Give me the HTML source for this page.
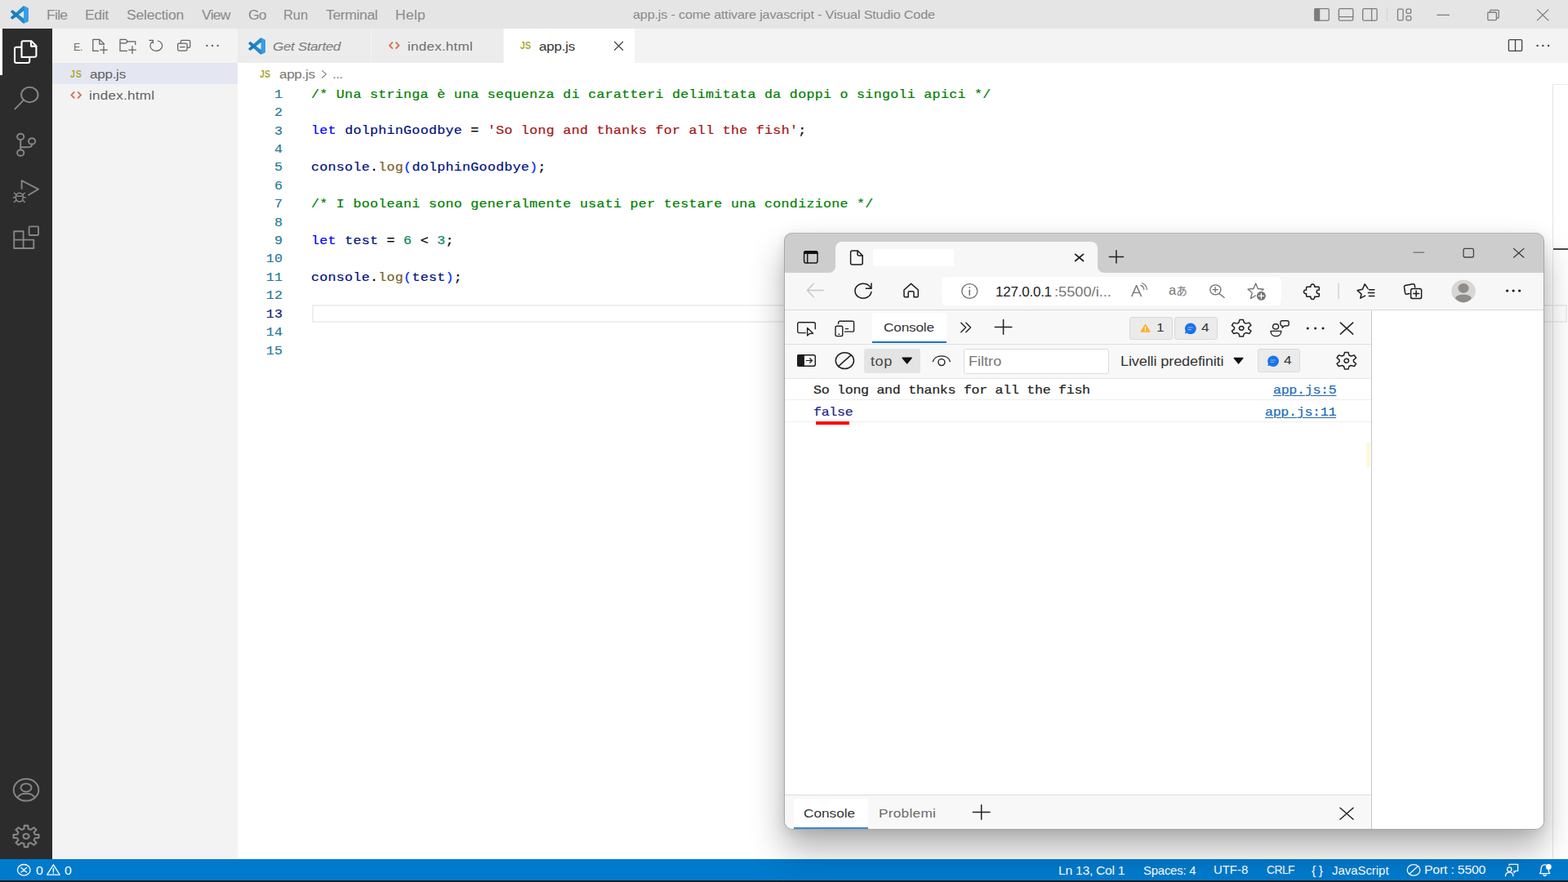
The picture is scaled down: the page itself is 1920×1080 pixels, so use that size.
<!DOCTYPE html>
<html lang="it">
<head>
<meta charset="utf-8">
<title>app.js - come attivare javascript - Visual Studio Code</title>
<style>
*{box-sizing:border-box}
html,body{margin:0;padding:0;width:1920px;height:1080px;overflow:hidden;background:#fff}
body{position:relative;font-family:"Liberation Sans","Noto Sans CJK JP",sans-serif;color:#333;-webkit-font-smoothing:antialiased}
.a{position:absolute}
.t{position:absolute;white-space:nowrap;line-height:1;margin:0;padding:0;transform:scaleX(1.111);transform-origin:0 0}
svg{position:absolute;overflow:visible}
.mono{font-family:"Liberation Mono","DejaVu Sans Mono",monospace}

/* ---------- VS Code chrome ---------- */
#titlebar{left:0;top:0;width:1920px;height:35px;background:#e5e5e5}
#titlebar .t{font-size:16px;color:#8a8a8a;top:10px}
#actbar{left:0;top:35px;width:64px;height:1017px;background:#2c2c2c}
#actind{left:0;top:35px;width:3px;height:57px;background:#fff}
#sidebar{left:64px;top:35px;width:227px;height:1017px;background:#f3f3f3}
#siderow{left:64px;top:77px;width:227px;height:26px;background:#e4e6f1}
#tabs{left:291px;top:35px;width:1629px;height:42px;background:#f3f3f3}
.tab{position:absolute;top:35px;height:42px;background:#ececec;border-right:1px solid #f3f3f3}
#tab3{background:#fff;border-right:0}
#editor{left:291px;top:77px;width:1629px;height:975px;background:#fff}
#status{left:0;top:1052px;width:1920px;height:26px;background:#007acc}
#status .t{color:#fff;font-size:15.5px;top:1058px}
#bottomline{left:0;top:1078px;width:1920px;height:2px;background:#1d1d1d}

/* ---------- editor ---------- */
.ln{position:absolute;left:300px;width:46.3px;text-align:right;font-size:15px;letter-spacing:.234px;margin-top:2.7px;-webkit-text-stroke:.15px currentColor;line-height:22.5px;height:22.5px;color:#237893;white-space:nowrap;transform:scaleX(1.111);transform-origin:100% 0}
.cl{position:absolute;left:381.3px;font-size:15px;letter-spacing:.25px;margin-top:2.6px;-webkit-text-stroke:.2px currentColor;line-height:22.5px;height:22.5px;color:#000;white-space:pre;transform:scaleX(1.111);transform-origin:0 0}
.c-com{color:#008000}.c-kw{color:#0000ff}.c-var{color:#001080}.c-str{color:#a31515}.c-fn{color:#795e26}.c-num{color:#098658}.c-par{color:#0431fa}
#curline{left:381.5px;top:373.2px;width:1537px;height:22px;border:2px solid #efefef}
#ruler{left:1901px;top:103px;width:19px;height:949px;border-left:1px solid #e4e4e4;border-top:1px solid #ececec}
#rulermark{left:1902px;top:304px;width:18px;height:2px;background:#4a4a4a}

/* ---------- browser window ---------- */
#bshadow{left:959.5px;top:285px;width:931px;height:730.5px;border-radius:10px;box-shadow:0 24px 42px rgba(0,0,0,.30),0 3px 14px rgba(0,0,0,.09)}
#bwin{left:959.6px;top:285px;width:930.8px;height:730.4px;border-radius:10px;background:linear-gradient(#cdcdcd 0,#cdcdcd 48.5px,#f7f7f7 48.5px,#f7f7f7 94.5px,#fff 94.5px,#fff 100%);overflow:hidden}
#bborder{left:959.5px;top:285px;width:931px;height:730.5px;border-radius:10px;border:1px solid #a6a6a6;border-top-color:#b8b8b8}
#bwin .a,#bwin .t,#bwin svg{position:absolute}
#btitle{left:0;top:0;width:930px;height:48.5px;background:#cdcdcd}
#btab{left:63.5px;top:11px;width:320.5px;height:38px;background:#f7f7f7;border-radius:8px 8px 0 0}
#btabl{left:55.5px;top:40.5px;width:8px;height:8px;background:radial-gradient(circle at 0 0,rgba(247,247,247,0) 7.5px,#f7f7f7 8.5px)}
#btabr{left:384px;top:40.5px;width:8px;height:8px;background:radial-gradient(circle at 100% 0,rgba(247,247,247,0) 7.5px,#f7f7f7 8.5px)}
#bredact{left:109px;top:20px;width:99px;height:21px;background:#fff}
#btool{left:0;top:48.5px;width:930px;height:46px;background:#f7f7f7;border-bottom:1px solid #d9d9d9}
#burl{left:193px;top:53.8px;width:416px;height:35.2px;background:#fff;border-radius:6px}
#dt{left:0;top:94.5px;width:720px;height:636px;background:#fff;border-right:1px solid #c6c6c6}
#dttabs{left:0;top:94.5px;width:719px;height:42.5px;background:#f8f8f8;border-bottom:1px solid #dedede}
#dtconsoletab{left:107.6px;top:97.7px;width:91px;height:37.5px;background:#fff;border-bottom:2.5px solid #1a73c7;border-radius:3px 3px 0 0}
#dttool{left:0;top:137px;width:719px;height:41.7px;background:#f8f8f8;border-bottom:1px solid #e6e6e6}
.badge{position:absolute;background:#ebebeb;border:1px solid #dadada;border-radius:3px}
.crow{position:absolute;left:0;width:719px;border-bottom:1px solid #efefef}
#drawer{left:0;top:688px;width:719px;height:42px;background:#f8f8f8;border-top:1px solid #dcdcdc}
#drawertab{left:11.7px;top:692.5px;width:91px;height:37.4px;background:#fff;border-bottom:2.7px solid #3b8bd0;border-radius:3px 3px 0 0}
#topsel{left:98px;top:141.5px;width:69px;height:30px;background:#e4e4e4;border-radius:3px}
#filter{left:220.5px;top:141.5px;width:177.5px;height:31px;background:#fff;border:1px solid #dcdcdc;border-radius:3px}
#ymark{left:713px;top:257px;width:5.5px;height:30px;background:#fdf8dc}
</style>
</head>
<body>

<!-- VS Code blocks -->
<div class="a" id="titlebar"></div>
<div class="a" id="actbar"></div>
<div class="a" id="actind"></div>
<div class="a" id="sidebar"></div>
<div class="a" id="siderow"></div>
<div class="a" id="tabs"></div>
<div class="tab" id="tab1" style="left:291px;width:164px"></div>
<div class="tab" id="tab2" style="left:455px;width:162px"></div>
<div class="tab" id="tab3" style="left:617px;width:160px"></div>
<div class="a" id="editor"></div>
<div class="a" id="curline"></div>
<div class="a" id="ruler"></div>
<div class="a" id="rulermark"></div>
<div class="a" id="status"></div>
<div class="a" id="bottomline"></div>

<!-- title bar text -->
<span class="t" id="m-file" style="left:57.0px;top:10.5px;letter-spacing:-0.66px;font-size:15.8px;color:#8a8a8a">File</span>
<span class="t" id="m-edit" style="left:104.0px;top:10.5px;letter-spacing:-0.33px;font-size:15.8px;color:#8a8a8a">Edit</span>
<span class="t" id="m-sel" style="left:155.0px;top:10.5px;letter-spacing:-0.22px;font-size:15.8px;color:#8a8a8a">Selection</span>
<span class="t" id="m-view" style="left:246.7px;top:10.5px;letter-spacing:-0.66px;font-size:15.8px;color:#8a8a8a">View</span>
<span class="t" id="m-go" style="left:304.0px;top:10.8px;letter-spacing:-0.90px;font-size:15.8px;color:#8a8a8a">Go</span>
<span class="t" id="m-run" style="left:347.0px;top:10.8px;letter-spacing:0.00px;font-size:15.8px;color:#8a8a8a;transform:scaleX(1.04)">Run</span>
<span class="t" id="m-term" style="left:399.0px;top:10.5px;letter-spacing:-0.34px;font-size:15.8px;color:#8a8a8a">Terminal</span>
<span class="t" id="m-help" style="left:484.0px;top:10.5px;letter-spacing:0.23px;font-size:15.8px;color:#8a8a8a">Help</span>
<span class="t" id="m-title" style="left:775.0px;top:11.2px;letter-spacing:-0.17px;font-size:14.6px;color:#8a8a8a">app.js - come attivare javascript - Visual Studio Code</span>
<!--TITLEBAR-->
<!--VSICONS-START-->
<svg id="vsicons" width="1920" height="1080" viewBox="0 0 1920 1080" style="left:0;top:0" fill="none" stroke-linecap="round" stroke-linejoin="round">
<g transform="translate(13.2,7.2) scale(0.215)"><path fill="#2489ca" d="M96.46 10.8L75.86.88a6.23 6.23 0 0 0-7.1 1.21L29.35 38.04 12.19 25.01a4.16 4.16 0 0 0-5.32.24L1.36 30.26a4.17 4.17 0 0 0 0 6.17L16.25 50 1.36 63.58a4.17 4.17 0 0 0 0 6.17l5.5 5.01a4.16 4.16 0 0 0 5.32.24l17.17-13.03 39.41 35.95a6.22 6.22 0 0 0 7.1 1.21l20.6-9.91A6.25 6.25 0 0 0 100 83.58V16.41a6.25 6.25 0 0 0-3.54-5.61zM75.01 72.7L45.11 50l29.9-22.7z"/><path fill="#1070b3" d="M29.35 38.04 12.19 25.01a4.16 4.16 0 0 0-5.32.24L1.36 30.26a4.17 4.17 0 0 0 0 6.17L16.25 50 1.36 63.58a4.17 4.17 0 0 0 0 6.17l5.5 5.01a4.16 4.16 0 0 0 5.32.24l17.17-13.03L45.11 50z" opacity=".55"/><path fill="#3c9fe8" d="M75.86.88 96.46 10.8A6.25 6.25 0 0 1 100 16.41v67.17a6.25 6.25 0 0 1-3.54 5.63l-20.6 9.91a6.2 6.2 0 0 1-.85.33V.55c.29.09.57.2.85.33z" opacity=".9"/></g>
<g transform="translate(304.4,46.2) scale(0.205)"><path fill="#2489ca" d="M96.46 10.8L75.86.88a6.23 6.23 0 0 0-7.1 1.21L29.35 38.04 12.19 25.01a4.16 4.16 0 0 0-5.32.24L1.36 30.26a4.17 4.17 0 0 0 0 6.17L16.25 50 1.36 63.58a4.17 4.17 0 0 0 0 6.17l5.5 5.01a4.16 4.16 0 0 0 5.32.24l17.17-13.03 39.41 35.95a6.22 6.22 0 0 0 7.1 1.21l20.6-9.91A6.25 6.25 0 0 0 100 83.58V16.41a6.25 6.25 0 0 0-3.54-5.61zM75.01 72.7L45.11 50l29.9-22.7z"/><path fill="#1070b3" d="M29.35 38.04 12.19 25.01a4.16 4.16 0 0 0-5.32.24L1.36 30.26a4.17 4.17 0 0 0 0 6.17L16.25 50 1.36 63.58a4.17 4.17 0 0 0 0 6.17l5.5 5.01a4.16 4.16 0 0 0 5.32.24l17.17-13.03L45.11 50z" opacity=".55"/><path fill="#3c9fe8" d="M75.86.88 96.46 10.8A6.25 6.25 0 0 1 100 16.41v67.17a6.25 6.25 0 0 1-3.54 5.63l-20.6 9.91a6.2 6.2 0 0 1-.85.33V.55c.29.09.57.2.85.33z" opacity=".9"/></g>
<g stroke="#7c7c7c" stroke-width="1.3">
<rect x="1609.9" y="10.7" width="17.4" height="14.4" rx="1.6"/><path d="M1610,11 h5.6 v14 h-5.6z" fill="#7c7c7c"/>
<rect x="1639.4" y="10.7" width="17.4" height="14.4" rx="1.6"/><path d="M1639.6,20.6 h17"/>
<rect x="1668.7" y="10.7" width="17.4" height="14.4" rx="1.6"/><path d="M1679.6,11 v14"/>
<rect x="1711.5" y="11.2" width="6.6" height="13.6" rx="1.4"/><rect x="1722" y="11.2" width="5.7" height="5.2" rx="1.4"/><rect x="1722" y="19.6" width="5.7" height="5.2" rx="1.4"/>
<path d="M1760,18.4 h14.4"/>
<rect x="1821.8" y="15" width="10.6" height="9.6" rx="1"/><path d="M1824.6,14.8 v-1.4 a1,1 0 0 1 1,-1 h8.6 a1,1 0 0 1 1,1 v7.6 a1,1 0 0 1 -1,1 h-1.6"/>
<path d="M1882.4,11.9 l13.4,13 M1895.8,11.9 l-13.4,13"/>
</g>
<path d="M1698.4,9 v17.6" stroke="#d2d2d2" stroke-width="1"/>
<g stroke="#ffffff" stroke-width="2.1">
<path d="M26.5,70 V52.2 a2,2 0 0 1 2,-2 H38.4 L44.4,56.2 V67.8 a2,2 0 0 1 -2,2 Z"/><path d="M38,50.6 V56.6 H44"/>
<path d="M26,57.8 H20 a2,2 0 0 0 -2,2 V75 a2,2 0 0 0 2,2 H34.2 a2,2 0 0 0 2,-2 V70.4"/>
</g>
<g stroke="#858585" stroke-width="2">
<ellipse cx="36.3" cy="116" rx="10.2" ry="9.2"/><path d="M28.9,122.6 L18.4,133.4"/>
<ellipse cx="25.2" cy="167.4" rx="4.1" ry="3.65"/><ellipse cx="39.1" cy="172.9" rx="4.1" ry="3.65"/><ellipse cx="25.2" cy="187.2" rx="4.1" ry="3.65"/>
<path d="M25.2,171.2 V183.4"/><path d="M39.1,176.7 C39.1,180.6 36,180.3 25.4,180.3"/>
<path d="M26.6,231 V221.2 L47,231.6 L35,238.8" stroke-width="1.9"/>
<g stroke-width="1.5"><ellipse cx="23.8" cy="241.6" rx="4.6" ry="5.4"/><path d="M19.4,240.2 h8.8 M19.2,241.8 h-2.8 M28.4,241.8 h2.8 M19.8,238.4 l-2.4,-2.2 M27.8,238.4 l2.4,-2.2 M19.8,245.2 l-2.4,2.2 M27.8,245.2 l2.4,2.2"/></g>
<g stroke-width="1.9"><path d="M17.2,283.3 H28.6 V293.6 H41.3 V304 H17.2 Z M17.2,293.6 H28.6 V304"/><rect x="35.6" y="277.4" width="11.4" height="10.6" rx="1"/></g>
<ellipse cx="32" cy="967.2" rx="15.3" ry="13.4"/><ellipse cx="32" cy="964.4" rx="6.5" ry="5"/><path d="M21.6,976.6 C24,970 40,970 42.4,976.6"/>
<g transform="translate(32,1024) scale(1.09,0.92)"><path d="M-2.46,-9.90 L-2.03,-14.26 L2.03,-14.26 L2.46,-9.90 L5.26,-8.74 L8.65,-11.52 L11.52,-8.65 L8.74,-5.26 L9.90,-2.46 L14.26,-2.03 L14.26,2.03 L9.90,2.46 L8.74,5.26 L11.52,8.65 L8.65,11.52 L5.26,8.74 L2.46,9.90 L2.03,14.26 L-2.03,14.26 L-2.46,9.90 L-5.26,8.74 L-8.65,11.52 L-11.52,8.65 L-8.74,5.26 L-9.90,2.46 L-14.26,2.03 L-14.26,-2.03 L-9.90,-2.46 L-8.74,-5.26 L-11.52,-8.65 L-8.65,-11.52 L-5.26,-8.74Z" stroke-width="2.1" vector-effect="non-scaling-stroke"/><circle cx="0" cy="0" r="3.3" stroke-width="2.1" vector-effect="non-scaling-stroke"/></g>
</g>
<g stroke="#616161" stroke-width="1.25">
<path d="M120.4,62.4 H113.8 V48.4 H122 L127.4,53.8 V54.6"/><path d="M121.8,48.6 V54 H127.2"/><path d="M127,56.6 v8.8 M122.6,61 h8.8"/>
<path d="M155.4,62.4 H147 V48.4 H154.2 L156.4,50.8 H165.8 V54.6"/><path d="M147.2,52.8 H154.4 L156.4,50.8"/><path d="M162,56.6 v8.8 M157.6,61 h8.8"/>
<path d="M193.5,50 A7.4,6.3 0 1 1 186.4,51.3"/><path d="M183,49.4 H187.4 V52.8"/>
<rect x="217.7" y="53" width="11.4" height="9" rx="1.4"/><path d="M220.6,57.5 h5.6"/><path d="M221.4,52.6 v-1.8 a1.4,1.4 0 0 1 1.4,-1.4 h8.6 a1.4,1.4 0 0 1 1.4,1.4 v6.2 a1.4,1.4 0 0 1 -1.4,1.4 h-2"/>
</g>
<g fill="#616161"><circle cx="253.4" cy="55.9" r="1.2"/><circle cx="260" cy="55.9" r="1.2"/><circle cx="266.7" cy="55.9" r="1.2"/></g>
<g stroke="#d2704a" stroke-width="1.8" stroke-linecap="butt" stroke-linejoin="miter"><path d="M91.2,112.4 L87.4,116.4 L91.2,120.4 M95.2,112.4 L99,116.4 L95.2,120.4"/>
<path d="M480.8,51.7 L477,55.7 L480.8,59.7 M484.6,51.7 L488.4,55.7 L484.6,59.7"/></g>
<path d="M394.4,86.6 L399.4,90.9 L394.4,95.2" stroke="#7a7a7a" stroke-width="1.2"/>
<path d="M752.6,51.2 l10,10 M762.6,51.2 l-10,10" stroke="#4a4a4a" stroke-width="1.3"/>
<g stroke="#424242" stroke-width="1.3"><rect x="1847.4" y="48.6" width="16.2" height="13.8" rx="1.2"/><path d="M1855.5,48.8 v13.4"/></g>
<g fill="#424242"><circle cx="1882.6" cy="55.9" r="1.2"/><circle cx="1889.3" cy="55.9" r="1.2"/><circle cx="1896.1" cy="55.9" r="1.2"/></g>
<g stroke="#ffffff" stroke-width="1.3">
<ellipse cx="29.25" cy="1065.3" rx="7.8" ry="6.8"/><path d="M25.9,1062.5 l6.7,5.6 M32.6,1062.5 l-6.7,5.6"/>
<path d="M65.4,1058.8 L73.2,1071.2 H57.6 Z"/><path d="M65.4,1063.2 v4" stroke-width="1.5"/><path d="M65.4,1068.9 v.4" stroke-width="1.5"/>
<ellipse cx="1731" cy="1065.4" rx="7.8" ry="6.8"/><path d="M1725.6,1070.2 l10.8,-9.6"/>
<circle cx="1848.2" cy="1064.6" r="2.7"/><path d="M1843.4,1072.6 c0.4,-6 9.2,-6 9.6,0"/><path d="M1848,1059.6 v-1.2 h10.6 v8 h-2.6 l-2,2.2 v-2.2"/>
<path d="M1885.6,1069.6 c1.4,-1.6 1.4,-3 1.4,-5.4 c0,-3.4 1.8,-5.4 4.6,-5.4 c2.8,0 4.6,2 4.6,5.4 c0,2.4 0,3.8 1.4,5.4 Z"/><path d="M1890,1071.2 c0.4,1.4 2.8,1.4 3.2,0"/>
</g>
<circle cx="1896.3" cy="1061.5" r="3.4" fill="#ffffff"/>
</svg>
<!--VSICONS-END-->
<!-- sidebar text -->
<span class="t" id="s-e" style="left:90.0px;top:51.6px;letter-spacing:-0.30px;font-size:12.4px;transform:none;color:#6b6b6b">E.</span>
<span class="t" id="s-js" style="left:86.0px;top:85.1px;letter-spacing:1.00px;font-size:12.3px;transform:scaleX(.86);font-weight:bold;color:#a9a935">JS</span>
<span class="t" id="s-app" style="left:110.0px;top:83.0px;letter-spacing:-0.26px;font-size:15.4px;color:#616161">app.js</span>
<span class="t" id="s-idx" style="left:109.0px;top:108.9px;letter-spacing:0.20px;font-size:15.4px;color:#616161">index.html</span>
<!--SIDEBAR-->
<!-- tabs text -->
<span class="t" id="t-gs" style="left:334.4px;top:49.3px;letter-spacing:-0.37px;font-size:15.4px;font-style:italic;color:#7b7b7b">Get Started</span>
<span class="t" id="t-idx" style="left:498.7px;top:48.7px;letter-spacing:0.18px;font-size:15.4px;color:#6f6f6f">index.html</span>
<span class="t" id="t-js" style="left:636.7px;top:50.0px;letter-spacing:0.20px;font-size:12.3px;transform:scaleX(.86);font-weight:bold;color:#a9a935">JS</span>
<span class="t" id="t-app" style="left:659.6px;top:48.6px;letter-spacing:-0.22px;font-size:15.4px;color:#333">app.js</span>
<span class="t" id="b-js" style="left:318.3px;top:85.1px;letter-spacing:0.20px;font-size:12.3px;transform:scaleX(.86);font-weight:bold;color:#a9a935">JS</span>
<span class="t" id="b-app" style="left:342.0px;top:83.0px;letter-spacing:-0.30px;font-size:15.4px;color:#767676">app.js</span>
<span class="t" id="b-dots" style="left:407.0px;top:83.0px;letter-spacing:-0.55px;font-size:15.4px;color:#767676">...</span>
<!--TABS-->
<!-- editor lines -->
<div class="ln mono" id="ln1" style="top:103.00px;color:#237893">1</div><div class="cl mono" id="cl1" style="top:103.00px"><span class="c-com">/* Una stringa è una sequenza di caratteri delimitata da doppi o singoli apici */</span></div>
<div class="ln mono" id="ln2" style="top:125.42px;color:#237893">2</div>
<div class="ln mono" id="ln3" style="top:147.84px;color:#237893">3</div><div class="cl mono" id="cl3" style="top:147.84px"><span class="c-kw">let</span> <span class="c-var">dolphinGoodbye</span> = <span class="c-str">'So long and thanks for all the fish'</span>;</div>
<div class="ln mono" id="ln4" style="top:170.26px;color:#237893">4</div>
<div class="ln mono" id="ln5" style="top:192.68px;color:#237893">5</div><div class="cl mono" id="cl5" style="top:192.68px"><span class="c-var">console</span>.<span class="c-fn">log</span><span class="c-par">(</span><span class="c-var">dolphinGoodbye</span><span class="c-par">)</span>;</div>
<div class="ln mono" id="ln6" style="top:215.10px;color:#237893">6</div>
<div class="ln mono" id="ln7" style="top:237.52px;color:#237893">7</div><div class="cl mono" id="cl7" style="top:237.52px"><span class="c-com">/* I booleani sono generalmente usati per testare una condizione */</span></div>
<div class="ln mono" id="ln8" style="top:259.94px;color:#237893">8</div>
<div class="ln mono" id="ln9" style="top:282.36px;color:#237893">9</div><div class="cl mono" id="cl9" style="top:282.36px"><span class="c-kw">let</span> <span class="c-var">test</span> = <span class="c-num">6</span> &lt; <span class="c-num">3</span>;</div>
<div class="ln mono" id="ln10" style="top:304.78px;color:#237893">10</div>
<div class="ln mono" id="ln11" style="top:327.20px;color:#237893">11</div><div class="cl mono" id="cl11" style="top:327.20px"><span class="c-var">console</span>.<span class="c-fn">log</span><span class="c-par">(</span><span class="c-var">test</span><span class="c-par">)</span>;</div>
<div class="ln mono" id="ln12" style="top:349.62px;color:#237893">12</div>
<div class="ln mono" id="ln13" style="top:372.04px;color:#0b216f">13</div>
<div class="ln mono" id="ln14" style="top:394.46px;color:#237893">14</div>
<div class="ln mono" id="ln15" style="top:416.88px;color:#237893">15</div>
<!--EDITOR-->
<!-- status bar text -->
<span class="t" id="st-e0" style="left:43.7px;top:1058.5px;letter-spacing:0.00px;font-size:14.2px;color:#fff">0</span>
<span class="t" id="st-w0" style="left:79.0px;top:1058.5px;letter-spacing:0.00px;font-size:14.2px;color:#fff">0</span>
<span class="t" id="st-ln" style="left:1296.2px;top:1059.0px;letter-spacing:-0.28px;font-size:14.2px;color:#fff">Ln 13, Col 1</span>
<span class="t" id="st-sp" style="left:1400.0px;top:1058.8px;letter-spacing:-0.20px;font-size:14.2px;color:#fff;transform:scaleX(1.05)">Spaces: 4</span>
<span class="t" id="st-utf" style="left:1486.0px;top:1058.2px;letter-spacing:0.00px;font-size:14.2px;color:#fff;transform:scaleX(1.05)">UTF-8</span>
<span class="t" id="st-crlf" style="left:1551.2px;top:1058.2px;letter-spacing:-0.60px;font-size:14.2px;color:#fff;transform:scaleX(.98)">CRLF</span>
<span class="t" id="st-br" style="left:1606.4px;top:1058.8px;letter-spacing:-0.45px;font-size:14.2px;color:#fff">{ }</span>
<span class="t" id="st-lang" style="left:1631.0px;top:1058.9px;letter-spacing:0.00px;font-size:14.2px;color:#fff;transform:scaleX(1.05)">JavaScript</span>
<span class="t" id="st-port" style="left:1744.4px;top:1058.2px;letter-spacing:-0.16px;font-size:14.2px;color:#fff">Port : 5500</span>
<!--STATUS-->

<!-- Browser window -->
<div class="a" id="bshadow"></div>
<div class="a" id="bwin">
<div class="a" id="bwin-in" style="left:0.4px;top:0;width:930px;height:730px">
  <div class="a" id="btitle"></div>
  <div class="a" id="btool"></div>
  <div class="a" id="btab"></div>
  <div class="a" id="btabl"></div>
  <div class="a" id="btabr"></div>
  <div class="a" id="bredact"></div>
  <div class="a" id="burl"></div>
  <div class="a" id="dt"></div>
  <div class="a" id="dttabs"></div>
  <div class="a" id="dtconsoletab"></div>
  <div class="badge" style="left:423px;top:102.5px;width:53px;height:28.5px"></div>
  <div class="badge" style="left:478px;top:102.5px;width:53px;height:28.5px"></div>
  <div class="a" id="dttool"></div>
  <div class="a" id="topsel"></div>
  <div class="a" id="filter"></div>
  <div class="badge" style="left:579.7px;top:142.2px;width:52.3px;height:29px"></div>
  <div class="crow" style="top:178.7px;height:26px"></div>
  <div class="crow" style="top:204.7px;height:27px"></div>
  <div class="a" id="ymark"></div>
  <div class="a" id="drawer"></div>
  <div class="a" id="drawertab"></div>
</div>
</div>
<div class="a" id="bborder"></div>
<!--BICONS-START-->
<svg id="bicons" width="1920" height="1080" viewBox="0 0 1920 1080" style="left:0;top:0" fill="none" stroke-linecap="round" stroke-linejoin="round">
<g stroke="#1b1b1b" stroke-width="1.5"><rect x="984.6" y="307.8" width="16.4" height="14.2" rx="2.6"/><path d="M984,310.9 v-1.4 a2.6,2.6 0 0 1 2.6,-2.6 h12.4 a2.6,2.6 0 0 1 2.6,2.6 v1.4 z" fill="#111" stroke="none"/><path d="M988.7,310 v11.8"/></g>
<g stroke="#1b1b1b" stroke-width="1.5"><path d="M1043.6,307 h6.6 l6,6 v9 a2,2 0 0 1 -2,2 h-10.6 a2,2 0 0 1 -2,-2 v-13 a2,2 0 0 1 2,-2 z"/><path d="M1050,307.2 v4.2 a1.6,1.6 0 0 0 1.6,1.6 h4.4"/></g>
<path d="M1316.70,311.30 L1326.50,319.50 M1326.50,311.30 L1316.70,319.50" stroke="#1b1b1b" stroke-width="1.7"/>
<path d="M1358.30,314.40 H1375.50 M1366.90,306.80 V322.00" stroke="#222" stroke-width="1.5"/>
<path d="M1730.8,309.1 h13" stroke="#6f6f6f" stroke-width="1.2"/>
<rect x="1792" y="304.4" width="12.4" height="10.6" rx="2" stroke="#444" stroke-width="1.3"/>
<path d="M1853.50,304.40 L1865.90,315.20 M1865.90,304.40 L1853.50,315.20" stroke="#333" stroke-width="1.2"/>
<path d="M1008.2,355.5 H988.6 M996.2,347.6 L988.4,355.5 L996.2,363.4" stroke="#c6c6c6" stroke-width="1.4"/>
<g stroke="#1b1b1b" stroke-width="1.5"><path d="M1066.4,353.2 A10,9 0 1 0 1066.9,357.4"/><path d="M1067,347 v6.2 h-6.6"/></g>
<path d="M1107,355 L1115.6,347.4 L1124.3,355 V362.4 a1.4,1.4 0 0 1 -1.4,1.4 H1119 V358.2 a1.4,1.4 0 0 0 -1.4,-1.4 h-4 a1.4,1.4 0 0 0 -1.4,1.4 V363.8 H1108.4 a1.4,1.4 0 0 1 -1.4,-1.4 Z" stroke="#1b1b1b" stroke-width="1.5"/>
<g stroke="#6e6e6e"><ellipse cx="1187.3" cy="356.5" rx="9.5" ry="8.9" stroke-width="1.3"/><path d="M1187.2,355.2 v6" stroke-width="1.5"/><path d="M1187.2,351.8 v.3" stroke-width="1.7"/></g>
<g stroke="#767676" stroke-width="1.4"><path d="M1385.8,362.6 L1391.6,349.6 L1397.4,362.6 M1387.8,358.4 h7.6"/><path d="M1396.6,349.4 a6,6 0 0 1 4.2,5.2 M1398.4,346.8 a9,9 0 0 1 6,7.6" stroke-width="1.2"/></g>
<g stroke="#6e6e6e" stroke-width="1.3"><ellipse cx="1488.3" cy="354.8" rx="6.6" ry="6"/><path d="M1492.9,359.5 L1499.2,364.4 M1485,354.7 h6.2 M1488.1,351.6 v6.2"/></g>
<path d="M1537.60,347.00 L1540.30,353.48 L1547.30,354.05 L1541.97,358.62 L1543.60,365.45 L1537.60,361.80 L1531.60,365.45 L1533.23,358.62 L1527.90,354.05 L1534.90,353.48Z" stroke="#6e6e6e" stroke-width="1.3"/>
<circle cx="1544.4" cy="362.3" r="6.6" fill="#fff"/><circle cx="1544.4" cy="362.3" r="5.5" fill="#767676"/><path d="M1541.4,362.3 h6 M1544.4,359.3 v6" stroke="#fff" stroke-width="1.3"/>
<path d="M1600.6,351.3 H1604.9 a2.5,2.5 0 1 1 4.8,0 H1614.3 a1,1 0 0 1 1,1 V355 a2.4,2.4 0 1 0 0,4.6 V362.3 a1,1 0 0 1 -1,1 H1609.7 a2.5,2.5 0 1 1 -4.8,0 H1600.6 a1,1 0 0 1 -1,-1 V359.6 a2.4,2.4 0 1 1 0,-4.6 V352.3 a1,1 0 0 1 1,-1 Z" stroke="#1b1b1b" stroke-width="1.5"/>
<path d="M1639,347.4 v18.4" stroke="#c8c8c8" stroke-width="1.1"/>
<g stroke="#1b1b1b" stroke-width="1.5"><path d="M1675,353.4 L1671.2,347.8 L1668.4,354.2 L1662.2,355.6 L1667,360 L1665.8,365.2 L1671.6,362.2"/><path d="M1676.4,354.8 h6.4 M1675.4,358.6 h7.4 M1676.4,362.4 h6.4"/></g>
<g stroke="#1b1b1b" stroke-width="1.5"><path d="M1726,359.6 l-3.4,.6 a1.8,1.8 0 0 1 -2,-1.4 l-1.2,-7.4 a1.8,1.8 0 0 1 1.4,-2 l9.4,-1.6 a1.8,1.8 0 0 1 2,1.4 l.5,2.6"/><rect x="1727.6" y="353.4" width="13" height="12.2" rx="2.2"/><path d="M1730.6,359.5 h7 M1734.1,356 v7"/></g>
<ellipse cx="1792" cy="356.4" rx="14.8" ry="13.6" fill="#d8d6d4"/><ellipse cx="1792" cy="352.8" rx="6.6" ry="5.9" fill="#8f8c8a"/><path d="M1782,365.6 c0,-2.8 4,-4.8 9.9,-4.8 c5.9,0 9.9,2 9.9,4.8 c-2.6,3.2 -5.8,4.8 -9.9,4.8 c-4.1,0 -7.3,-1.6 -9.9,-4.8 z" fill="#8f8c8a"/>
<g fill="#111"><circle cx="1845.6" cy="356" r="1.6"/><circle cx="1853.1" cy="356" r="1.6"/><circle cx="1860.6" cy="356" r="1.6"/></g>
<g stroke="#222" stroke-width="1.4">
<path d="M986.4,407.6 H978.6 a1.9,1.9 0 0 1 -1.9,-1.9 V396.6 a1.9,1.9 0 0 1 1.9,-1.9 H996.4 a1.9,1.9 0 0 1 1.9,1.9 V402.8"/><path d="M988.6,401.6 V411 L991.2,408.6 L995.6,408.2 Z"/>
<rect x="1023" y="399.2" width="8.8" height="12.4" rx="1.8"/><path d="M1026.6,396.4 v-1.2 a1.9,1.9 0 0 1 1.9,-1.9 h15.2 a1.9,1.9 0 0 1 1.9,1.9 v9 a1.9,1.9 0 0 1 -1.9,1.9 h-9.2"/><path d="M1035.4,402.6 h3.2"/><path d="M1027,409.2 h.8"/>
<path d="M1176.8,395.2 L1182.6,401 L1176.8,406.8 M1182.8,395.2 L1188.6,401 L1182.8,406.8"/>
</g>
<path d="M1218.30,400.40 H1238.90 M1228.60,391.60 V409.20" stroke="#222" stroke-width="1.5"/>
<path d="M1402.5,397.6 L1407.8,406 H1397.2 Z" fill="#fbb02d" stroke="#fbb02d" stroke-width="1.4"/><path d="M1402.5,400.6 v2.6" stroke="#fff" stroke-width="1.2"/><path d="M1402.5,404.6 v.3" stroke="#fff" stroke-width="1.2"/>
<circle cx="1457.80" cy="402.30" r="6.91" fill="#1a73e8"/><path d="M1450.90,408.50 L1452.20,403.80 L1456.60,407.30 Z" fill="#1a73e8"/><path d="M1454.80,401.00 h5.6 M1454.80,403.60 h3.6" stroke="#8db8f3" stroke-width="1.1" fill="none"/>
<g transform="translate(1520.15,401.85) scale(1.2,1)"><path d="M-2.69,-6.79 L-1.84,-10.24 L1.84,-10.24 L2.69,-6.79 L4.53,-5.72 L7.94,-6.71 L9.79,-3.52 L7.22,-1.07 L7.22,1.07 L9.79,3.52 L7.94,6.71 L4.53,5.72 L2.69,6.79 L1.84,10.24 L-1.84,10.24 L-2.69,6.79 L-4.53,5.72 L-7.94,6.71 L-9.79,3.52 L-7.22,1.07 L-7.22,-1.07 L-9.79,-3.52 L-7.94,-6.71 L-4.53,-5.72Z" stroke="#222" stroke-width="1.5" vector-effect="non-scaling-stroke"/><ellipse cx="0" cy="0" rx="2.3" ry="2.45" stroke="#222" stroke-width="1.5" vector-effect="non-scaling-stroke"/></g>
<g stroke="#222" stroke-width="1.4"><ellipse cx="1562.1" cy="399.9" rx="3.5" ry="3.1"/><path d="M1556,405.4 h12.8 c0,3.8 -2.6,6.2 -6.4,6.2 c-3.8,0 -6.4,-2.4 -6.4,-6.2 z"/><path d="M1569.8,392.8 h6.4 a1.9,1.9 0 0 1 1.9,1.9 v2.4 a1.9,1.9 0 0 1 -1.9,1.9 h-3.4 l-2.6,2.4 v-2.4 h-.4 a1.9,1.9 0 0 1 -1.9,-1.9 v-2.4 a1.9,1.9 0 0 1 1.9,-1.9 z"/></g>
<g fill="#222"><circle cx="1601.3" cy="401.9" r="1.5"/><circle cx="1610.6" cy="401.9" r="1.5"/><circle cx="1620" cy="401.9" r="1.5"/></g>
<path d="M1641.30,395.10 L1656.70,409.10 M1656.70,395.10 L1641.30,409.10" stroke="#222" stroke-width="1.5"/>
<g stroke="#1b1b1b" stroke-width="1.4"><rect x="976.7" y="434.7" width="21.6" height="13.6" rx="2"/><path d="M977,435 h7.2 v13 h-7.2 z" fill="#1b1b1b"/><path d="M987.4,441.5 h6.8 M991.6,438.8 l2.8,2.7 l-2.8,2.7" stroke-width="1.2"/></g>
<g stroke="#222" stroke-width="1.5"><ellipse cx="1034.4" cy="441.6" rx="11.1" ry="9.9"/><path d="M1026.6,448.6 L1042.2,434.6"/></g>
<path d="M1105.20,438.30 L1116.10,438.30 L1110.65,444.80 Z" fill="#111" stroke="#111" stroke-width="1.6" stroke-linejoin="round"/>
<g stroke="#222" stroke-width="1.4"><path d="M1142.4,442.6 c2.4,-9 18.6,-9 21,0"/><circle cx="1152.9" cy="443.6" r="4"/></g>
<path d="M1511.40,438.50 L1521.70,438.50 L1516.55,444.80 Z" fill="#111" stroke="#111" stroke-width="1.6" stroke-linejoin="round"/>
<circle cx="1559.05" cy="442.25" r="6.86" fill="#1a73e8"/><path d="M1552.20,448.10 L1553.50,443.75 L1557.90,446.90 Z" fill="#1a73e8"/><path d="M1556.05,440.95 h5.6 M1556.05,443.55 h3.6" stroke="#8db8f3" stroke-width="1.1" fill="none"/>
<g transform="translate(1648.75,441.75) scale(1.2,1)"><path d="M-2.69,-6.79 L-1.84,-10.24 L1.84,-10.24 L2.69,-6.79 L4.53,-5.72 L7.94,-6.71 L9.79,-3.52 L7.22,-1.07 L7.22,1.07 L9.79,3.52 L7.94,6.71 L4.53,5.72 L2.69,6.79 L1.84,10.24 L-1.84,10.24 L-2.69,6.79 L-4.53,5.72 L-7.94,6.71 L-9.79,3.52 L-7.22,1.07 L-7.22,-1.07 L-9.79,-3.52 L-7.94,-6.71 L-4.53,-5.72Z" stroke="#222" stroke-width="1.5" vector-effect="non-scaling-stroke"/><ellipse cx="0" cy="0" rx="2.3" ry="2.45" stroke="#222" stroke-width="1.5" vector-effect="non-scaling-stroke"/></g>
<path d="M1191.40,994.50 H1212.00 M1201.70,985.70 V1003.30" stroke="#222" stroke-width="1.5"/>
<path d="M1641.00,989.30 L1657.00,1003.30 M1657.00,989.30 L1641.00,1003.30" stroke="#222" stroke-width="1.5"/>
</svg>
<!--BICONS-END-->
<!-- browser text -->
<span class="t" id="b-url" style="left:1219.0px;top:348.9px;letter-spacing:-0.24px;font-size:16.4px;color:#1b1b1b;transform:scaleX(1.04)">127.0.0.1</span>
<span class="t" id="b-url2" style="left:1291.0px;top:348.9px;letter-spacing:0.00px;font-size:16.4px;color:#767676">:5500/i...</span>
<span class="t" id="b-tr" style="left:1431.0px;top:346.5px;letter-spacing:0.00px;font-size:16.5px;color:#767676;transform:scaleX(1)">a<span style="font-family:'Noto Sans CJK JP','Liberation Sans',sans-serif;font-size:13.5px;letter-spacing:0">あ</span></span>
<span class="t" id="d-console" style="left:1082.0px;top:393.0px;letter-spacing:-0.17px;font-size:15.5px;color:#333">Console</span>
<span class="t" id="d-b1" style="left:1416.0px;top:393.0px;letter-spacing:0.00px;font-size:15.5px;color:#333">1</span>
<span class="t" id="d-b4" style="left:1471.0px;top:393.0px;letter-spacing:0.00px;font-size:15.5px;color:#333">4</span>
<span class="t" id="d-top" style="left:1065.8px;top:434.2px;letter-spacing:0.49px;font-size:16.3px;color:#474747">top</span>
<span class="t" id="d-filtro" style="left:1186.0px;top:433.9px;letter-spacing:0.00px;font-size:16.3px;color:#767676">Filtro</span>
<span class="t" id="d-liv" style="left:1372.0px;top:433.8px;letter-spacing:-0.11px;font-size:16.3px;color:#333">Livelli predefiniti</span>
<span class="t" id="d-b42" style="left:1572.0px;top:433.0px;letter-spacing:0.00px;font-size:15.5px;color:#333">4</span>
<span class="t mono" id="c-msg" style="left:995.9px;top:471.2px;letter-spacing:-0.29px;font-size:15.0px;color:#1f1f1f;-webkit-text-stroke:.22px currentColor">So long and thanks for all the fish</span>
<span class="t mono" id="c-false" style="left:996.3px;top:498.2px;letter-spacing:-0.29px;font-size:15.0px;color:#26268f;-webkit-text-stroke:.22px currentColor">false</span>
<span class="t mono" id="c-l1" style="left:1558.5px;top:471.0px;letter-spacing:-0.29px;font-size:15.0px;color:#1f6cb8;text-decoration:underline;text-underline-offset:1.5px;text-decoration-thickness:1.2px;-webkit-text-stroke:.22px currentColor">app.js:5</span>
<span class="t mono" id="c-l2" style="left:1548.9px;top:497.6px;letter-spacing:-0.29px;font-size:15.0px;color:#1f6cb8;text-decoration:underline;text-underline-offset:1.5px;text-decoration-thickness:1.2px;-webkit-text-stroke:.22px currentColor">app.js:11</span>
<div class="a" id="redline" style="left:999px;top:516.3px;width:41px;height:3.8px;background:#ff0000"></div>
<span class="t" id="w-console" style="left:984.3px;top:988.1px;letter-spacing:0.00px;font-size:15.5px;color:#333">Console</span>
<span class="t" id="w-prob" style="left:1076.0px;top:988.1px;letter-spacing:0.24px;font-size:15.5px;color:#6a6a6a">Problemi</span>
<!--BROWSER-->

</body>
</html>
